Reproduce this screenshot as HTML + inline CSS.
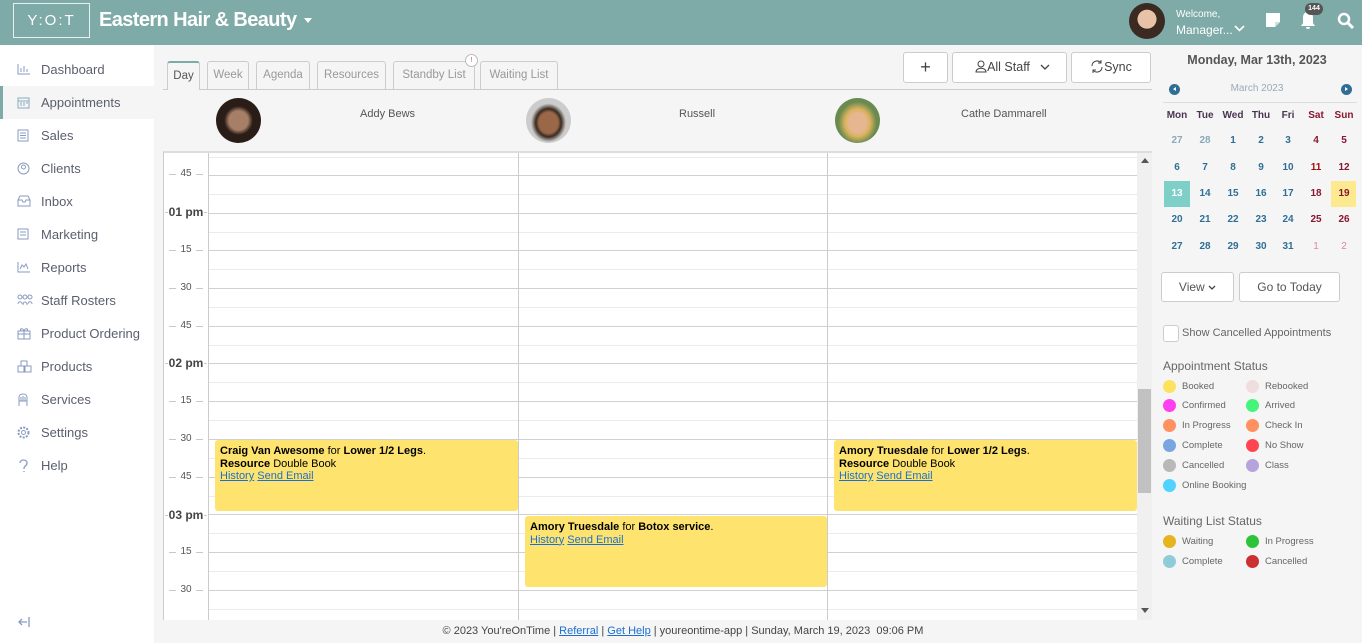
<!DOCTYPE html>
<html><head><meta charset="utf-8"><style>
*{box-sizing:border-box;margin:0;padding:0}
body{width:1362px;height:643px;overflow:hidden;background:#f5f5f5;font-family:"Liberation Sans",sans-serif;position:relative;color:#555}
.a{position:absolute}
.top{left:0;top:0;width:1362px;height:45px;background:#7eaaa8}
.side{left:0;top:45px;width:154px;height:598px;background:#fff}
.nav{left:0;width:154px;height:33px;font-size:13px;color:#5a5f6e;line-height:33px;padding-left:41px}
.nav svg{position:absolute;left:17px;top:10px}
.tab{top:61px;height:28px;border:1px solid #ccc;border-bottom:none;border-radius:3px 3px 0 0;font-size:11.5px;color:#999;text-align:center;line-height:27px;background:#f5f5f5}
.btn{background:#fff;border:1px solid #ccc;border-radius:3px;font-size:12.5px;color:#444;text-align:center}
.hl{left:208px;width:929px;height:1px;background:#d0d0d0}
.fl{left:208px;width:929px;height:1px;background:#ebebeb}
.lab{left:164px;width:44px;text-align:center;font-size:10px;color:#555;height:12px;line-height:12px;background:linear-gradient(#c8c8c8,#c8c8c8) no-repeat center/34px 1px}
.lab span{background:#fff;padding:0 4px}
.hr{font-size:12px;font-weight:bold;color:#444;background-size:42px 1px}
.hr span{padding:0 1px}
.appt{background:#fee46f;border-radius:3px;font-size:11px;color:#000;padding:5px 5px;line-height:12.5px}
.appt a{color:#1a6fd0;text-decoration:underline}
.cal{font-size:10px;font-weight:bold;text-align:center;width:26px;color:#2f6f95}
.dot{width:13px;height:13px;border-radius:50%}
.lg{font-size:9.5px;color:#666}
</style></head><body>
<div class="a top"></div>
<div class="a" style="left:13px;top:3px;width:77px;height:35px;border:1px solid #e8f0ef;color:#fff;font-size:15px;letter-spacing:2px;text-align:center;line-height:33px">Y:O:T</div>
<div class="a" style="left:99px;top:9px;color:#fff;font-size:20px;font-weight:bold;letter-spacing:-0.6px">Eastern Hair &amp; Beauty</div>
<div class="a" style="left:304px;top:18px;width:0;height:0;border-left:4px solid transparent;border-right:4px solid transparent;border-top:5px solid #fff"></div>
<div class="a" style="left:1129px;top:3px;width:36px;height:36px;border-radius:50%;background:radial-gradient(circle at 50% 45%,#e8c2a6 0 35%,#3b2a22 36%)"></div>
<div class="a" style="left:1176px;top:9px;color:#fff;font-size:10px">Welcome,</div>
<div class="a" style="left:1176px;top:23px;color:#fff;font-size:12px">Manager...</div>
<svg class="a" style="left:1234px;top:25px" width="11" height="8"><path d="M1 1l4.5 4.5L10 1" stroke="#fff" stroke-width="1.6" fill="none"/></svg>
<svg class="a" style="left:1265px;top:12px" width="16" height="16"><path d="M1 1h14v9l-5 5H1z" fill="#fff"/><path d="M10 15v-5h5" fill="#cfe0df"/></svg>
<svg class="a" style="left:1299px;top:11px" width="18" height="18"><path d="M9 1c-4 0-5 3-5 6v5l-2 3h14l-2-3V7c0-3-1-6-5-6zM7 16h4a2 2 0 0 1-4 0z" fill="#fff"/></svg>
<div class="a" style="left:1305px;top:3px;width:18px;height:12px;border-radius:6px;background:#555;color:#fff;font-size:7px;text-align:center;line-height:12px;font-weight:bold">144</div>
<svg class="a" style="left:1337px;top:12px" width="17" height="17"><circle cx="7" cy="7" r="5" stroke="#fff" stroke-width="2.5" fill="none"/><path d="M11 11l5 5" stroke="#fff" stroke-width="3"/></svg>

<div class="a side"></div>
<div class="a" style="left:0;top:86px;width:154px;height:33px;background:#f5f5f5"></div>
<div class="a" style="left:0;top:86px;width:3px;height:33px;background:#7eaaa8"></div>
<div class="a nav" style="top:53px"><svg width="14" height="12"><path d="M1 1v10h12M4 9V5M7 9V3M10 9V6" stroke="#8a9bc0" fill="none"/></svg>Dashboard</div>
<div class="a nav" style="top:86px"><svg width="13" height="13"><rect x="1" y="2" width="11" height="10" stroke="#8ab" fill="none"/><path d="M1 5h11M3 7h2M6 7h2M9 7h2M3 9h2M6 9h2" stroke="#8ab"/></svg>Appointments</div>
<div class="a nav" style="top:119px"><svg width="12" height="13"><rect x="1" y="1" width="10" height="11" stroke="#8a9bc0" fill="none"/><path d="M3 4h6M3 6.5h6M3 9h6" stroke="#8a9bc0"/></svg>Sales</div>
<div class="a nav" style="top:152px"><svg width="13" height="13"><circle cx="6.5" cy="6.5" r="5.5" stroke="#8a9bc0" fill="none"/><circle cx="6.5" cy="5" r="2" stroke="#8a9bc0" fill="none"/></svg>Clients</div>
<div class="a nav" style="top:185px"><svg width="14" height="12"><path d="M1 5l2-4h8l2 4v6H1zM1 5h4l1 2h2l1-2h4" stroke="#8a9bc0" fill="none"/></svg>Inbox</div>
<div class="a nav" style="top:218px"><svg width="12" height="12"><rect x="1" y="1" width="10" height="10" stroke="#8a9bc0" fill="none"/><path d="M3 4h6M3 7h6" stroke="#8a9bc0"/></svg>Marketing</div>
<div class="a nav" style="top:251px"><svg width="14" height="12"><path d="M1 1v10h12M3 8l2-4 2 2 2-3 2 5" stroke="#8a9bc0" fill="none"/></svg>Reports</div>
<div class="a nav" style="top:284px"><svg width="16" height="12"><circle cx="3" cy="3" r="2" stroke="#8a9bc0" fill="none"/><circle cx="8" cy="3" r="2" stroke="#8a9bc0" fill="none"/><circle cx="13" cy="3" r="2" stroke="#8a9bc0" fill="none"/><path d="M1 10c0-3 4-3 4 0M6 11c0-4 4-4 4 0M11 10c0-3 4-3 4 0" stroke="#8a9bc0" fill="none"/></svg>Staff Rosters</div>
<div class="a nav" style="top:317px"><svg width="14" height="13"><rect x="1" y="4" width="12" height="8" stroke="#8a9bc0" fill="none"/><path d="M7 4v8M1 7h12M4 4C2 1 6 1 7 4c1-3 5-3 3 0" stroke="#8a9bc0" fill="none"/></svg>Product Ordering</div>
<div class="a nav" style="top:350px"><svg width="15" height="13"><rect x="1" y="6" width="6" height="6" stroke="#8a9bc0" fill="none"/><rect x="8" y="6" width="6" height="6" stroke="#8a9bc0" fill="none"/><rect x="4" y="1" width="6" height="5" stroke="#8a9bc0" fill="none"/></svg>Products</div>
<div class="a nav" style="top:383px"><svg width="12" height="14"><path d="M2 13V4c0-4 8-4 8 0v9M2 8h8M4 4v4M6 3v5M8 4v4" stroke="#8a9bc0" fill="none"/></svg>Services</div>
<div class="a nav" style="top:416px"><svg width="13" height="13"><circle cx="6.5" cy="6.5" r="2" stroke="#8a9bc0" fill="none"/><circle cx="6.5" cy="6.5" r="5" stroke="#8a9bc0" stroke-dasharray="2 1.3" stroke-width="2" fill="none"/></svg>Settings</div>
<div class="a nav" style="top:449px"><svg width="12" height="14"><path d="M3 4c0-4 7-4 7 0 0 3-3 3-3 5v1M7 12v1" stroke="#8a9bc0" fill="none" stroke-width="1.3"/></svg>Help</div>
<svg class="a" style="left:17px;top:616px" width="14" height="12"><path d="M12 1v10M10 6H2M5 3L2 6l3 3" stroke="#8a9bc0" stroke-width="1.3" fill="none"/></svg>

<div class="a" style="left:163px;top:89px;width:989px;height:1px;background:#ccc"></div>
<div class="a tab" style="left:167px;width:33px;color:#555;background:#f5f5f5;height:29px;border-top:2px solid #7eaaa8">Day</div>
<div class="a tab" style="left:207px;width:42px">Week</div>
<div class="a tab" style="left:256px;width:54px">Agenda</div>
<div class="a tab" style="left:317px;width:69px">Resources</div>
<div class="a tab" style="left:393px;width:82px">Standby List</div>
<div class="a" style="left:465px;top:54px;width:13px;height:13px;border-radius:50%;border:1px solid #bbb;background:#fff;font-size:7px;text-align:center;line-height:11px;color:#a55">!</div>
<div class="a tab" style="left:480px;width:78px">Waiting List</div>

<div class="a btn" style="left:903px;top:52px;width:45px;height:31px;font-size:18px;line-height:28px">+</div>
<div class="a btn" style="left:952px;top:52px;width:115px;height:31px;line-height:29px;padding-right:14px"><svg width="12" height="13" style="vertical-align:-2px"><circle cx="6" cy="4" r="3" stroke="#444" fill="none"/><path d="M1 12c0-5 10-5 10 0z" stroke="#444" fill="none"/></svg>All Staff</div>
<svg class="a" style="left:1040px;top:64px" width="10" height="6"><path d="M1 1l4 4 4-4" stroke="#444" fill="none" stroke-width="1.3"/></svg>
<div class="a btn" style="left:1071px;top:52px;width:80px;height:31px;line-height:29px"><svg width="14" height="13" style="vertical-align:-2px"><path d="M2 6a5 5 0 0 1 9-3M12 7a5 5 0 0 1-9 3M11 0v3H8M3 13v-3h3" stroke="#444" fill="none"/></svg>Sync</div>

<div class="a" style="left:216px;top:98px;width:45px;height:45px;border-radius:50%;background:radial-gradient(ellipse at 50% 50%,#a77f66 0 30%,#2a1d17 45%)"></div>
<div class="a" style="left:360px;top:108px;font-size:11px;color:#555">Addy Bews</div>
<div class="a" style="left:526px;top:98px;width:45px;height:45px;border-radius:50%;background:radial-gradient(ellipse at 50% 55%,#9a6848 0 30%,#3a2a20 40%,#ccc 55%)"></div>
<div class="a" style="left:679px;top:108px;font-size:11px;color:#555">Russell</div>
<div class="a" style="left:835px;top:98px;width:45px;height:45px;border-radius:50%;background:radial-gradient(ellipse at 50% 55%,#e6b690 0 28%,#d9b25a 40%,#6a8a50 60%)"></div>
<div class="a" style="left:961px;top:108px;font-size:11px;color:#555">Cathe Dammarell</div>

<div class="a" style="left:163px;top:151px;width:989px;height:469px;background:#fff;border-top:2px solid #ddd;border-left:1px solid #ccc"></div>
<div class="a" style="left:1137px;top:153px;width:15px;height:467px;background:#f0f0f0"></div>
<div class="a" style="left:1138px;top:389px;width:13px;height:104px;background:#c1c1c1"></div>
<div class="a" style="left:1141px;top:158px;border-left:4px solid transparent;border-right:4px solid transparent;border-bottom:5px solid #555"></div>
<div class="a" style="left:1141px;top:608px;border-left:4px solid transparent;border-right:4px solid transparent;border-top:5px solid #555"></div>

<div class="a fl" style="top:157px"></div><div class="a fl" style="top:194px"></div><div class="a fl" style="top:232px"></div><div class="a fl" style="top:269px"></div><div class="a fl" style="top:307px"></div><div class="a fl" style="top:345px"></div><div class="a fl" style="top:382px"></div><div class="a fl" style="top:420px"></div><div class="a fl" style="top:458px"></div><div class="a fl" style="top:496px"></div><div class="a fl" style="top:533px"></div><div class="a fl" style="top:571px"></div><div class="a fl" style="top:609px"></div>
<div class="a hl" style="top:175px"></div><div class="a hl" style="top:213px"></div><div class="a hl" style="top:250px"></div><div class="a hl" style="top:288px"></div><div class="a hl" style="top:326px"></div><div class="a hl" style="top:363px"></div><div class="a hl" style="top:401px"></div><div class="a hl" style="top:439px"></div><div class="a hl" style="top:477px"></div><div class="a hl" style="top:514px"></div><div class="a hl" style="top:552px"></div><div class="a hl" style="top:590px"></div>
<div class="a" style="left:208px;top:153px;width:1px;height:467px;background:#ccc"></div>
<div class="a" style="left:518px;top:153px;width:1px;height:467px;background:#ccc"></div>
<div class="a" style="left:827px;top:153px;width:1px;height:467px;background:#ccc"></div>

<div class="a lab" style="top:168px"><span>45</span></div>
<div class="a lab hr" style="top:206px"><span>01 pm</span></div>
<div class="a lab" style="top:244px"><span>15</span></div>
<div class="a lab" style="top:282px"><span>30</span></div>
<div class="a lab" style="top:320px"><span>45</span></div>
<div class="a lab hr" style="top:357px"><span>02 pm</span></div>
<div class="a lab" style="top:395px"><span>15</span></div>
<div class="a lab" style="top:433px"><span>30</span></div>
<div class="a lab" style="top:471px"><span>45</span></div>
<div class="a lab hr" style="top:509px"><span>03 pm</span></div>
<div class="a lab" style="top:546px"><span>15</span></div>
<div class="a lab" style="top:584px"><span>30</span></div>

<div class="a appt" style="left:215px;top:440px;width:303px;height:71px"><b>Craig Van Awesome</b> for <b>Lower 1/2 Legs</b>.<br><b>Resource</b> Double Book<br><a>History</a> <a>Send Email</a></div>
<div class="a appt" style="left:525px;top:516px;width:302px;height:71px"><b>Amory Truesdale</b> for <b>Botox service</b>.<br><a>History</a> <a>Send Email</a></div>
<div class="a appt" style="left:834px;top:440px;width:303px;height:71px"><b>Amory Truesdale</b> for <b>Lower 1/2 Legs</b>.<br><b>Resource</b> Double Book<br><a>History</a> <a>Send Email</a></div>

<div class="a" style="left:154px;top:620px;width:1058px;height:23px;text-align:center;font-size:11px;line-height:23px;color:#444">© 2023 You'reOnTime | <u style="color:#1a6fd0">Referral</u> | <u style="color:#1a6fd0">Get Help</u> | youreontime-app | Sunday, March 19, 2023&nbsp; 09:06 PM</div>

<!-- right panel -->
<div class="a" style="left:1152px;top:53px;width:210px;text-align:center;font-size:12.5px;font-weight:bold;color:#555">Monday, Mar 13th, 2023</div>
<div class="a" style="left:1169px;top:84px;width:11px;height:11px;border-radius:50%;background:#2f6f95"></div>
<div class="a" style="left:1173px;top:87px;border-top:2.5px solid transparent;border-bottom:2.5px solid transparent;border-right:3px solid #fff"></div>
<div class="a" style="left:1341px;top:84px;width:11px;height:11px;border-radius:50%;background:#2f6f95"></div>
<div class="a" style="left:1345px;top:87px;border-top:2.5px solid transparent;border-bottom:2.5px solid transparent;border-left:3px solid #fff"></div>
<div class="a" style="left:1152px;top:83px;width:210px;text-align:center;font-size:10px;color:#9ab">March 2023</div>
<div class="a" style="left:1163px;top:102px;width:194px;height:1px;background:#ddd"></div>
<div class="a" style="left:1164px;top:181px;width:26px;height:26px;background:#7fcfc9"></div>
<div class="a" style="left:1331px;top:181px;width:25px;height:26px;background:#fde98f"></div>
<div class="a" style="left:1164px;top:110px;font-size:10px;font-weight:bold;color:#4a3550;width:200px">
<span class="a cal" style="left:0;color:#4a3550">Mon</span><span class="a cal" style="left:28px;color:#4a3550">Tue</span><span class="a cal" style="left:56px;color:#4a3550">Wed</span><span class="a cal" style="left:84px;color:#4a3550">Thu</span><span class="a cal" style="left:111px;color:#4a3550">Fri</span><span class="a cal" style="left:139px;color:#8a1530">Sat</span><span class="a cal" style="left:167px;color:#8a1530">Sun</span>
</div>
<div class="a" style="left:1164px;top:135px">
<span class="a cal" style="left:0;color:#8ab">27</span><span class="a cal" style="left:28px;color:#8ab">28</span><span class="a cal" style="left:56px">1</span><span class="a cal" style="left:84px">2</span><span class="a cal" style="left:111px">3</span><span class="a cal" style="left:139px;color:#8a1530">4</span><span class="a cal" style="left:167px;color:#8a1530">5</span>
</div>
<div class="a" style="left:1164px;top:162px">
<span class="a cal" style="left:0">6</span><span class="a cal" style="left:28px">7</span><span class="a cal" style="left:56px">8</span><span class="a cal" style="left:84px">9</span><span class="a cal" style="left:111px">10</span><span class="a cal" style="left:139px;color:#a01010">11</span><span class="a cal" style="left:167px;color:#8a1530">12</span>
</div>
<div class="a" style="left:1164px;top:188px">
<span class="a cal" style="left:0;color:#fff">13</span><span class="a cal" style="left:28px">14</span><span class="a cal" style="left:56px">15</span><span class="a cal" style="left:84px">16</span><span class="a cal" style="left:111px">17</span><span class="a cal" style="left:139px;color:#8a1530">18</span><span class="a cal" style="left:167px;color:#8a1530">19</span>
</div>
<div class="a" style="left:1164px;top:214px">
<span class="a cal" style="left:0">20</span><span class="a cal" style="left:28px">21</span><span class="a cal" style="left:56px">22</span><span class="a cal" style="left:84px">23</span><span class="a cal" style="left:111px">24</span><span class="a cal" style="left:139px;color:#8a1530">25</span><span class="a cal" style="left:167px;color:#8a1530">26</span>
</div>
<div class="a" style="left:1164px;top:241px">
<span class="a cal" style="left:0">27</span><span class="a cal" style="left:28px">28</span><span class="a cal" style="left:56px">29</span><span class="a cal" style="left:84px">30</span><span class="a cal" style="left:111px">31</span><span class="a cal" style="left:139px;color:#d98a9a;font-weight:normal">1</span><span class="a cal" style="left:167px;color:#d98a9a;font-weight:normal">2</span>
</div>

<div class="a btn" style="left:1161px;top:272px;width:73px;height:30px;line-height:29px;font-size:12px;color:#555">View <svg width="8" height="6"><path d="M1 1l3 3 3-3" stroke="#444" fill="none" stroke-width="1.3"/></svg></div>
<div class="a btn" style="left:1239px;top:272px;width:101px;height:30px;line-height:29px;font-size:12px;color:#555">Go to Today</div>
<div class="a" style="left:1163px;top:325px;width:16px;height:17px;border:1px solid #ccc;border-radius:3px;background:#fff"></div>
<div class="a" style="left:1182px;top:327px;font-size:11px;color:#666">Show Cancelled Appointments</div>
<div class="a" style="left:1163px;top:359px;font-size:12px;color:#666">Appointment Status</div>
<div class="a" style="left:1163px;top:514px;font-size:12px;color:#666">Waiting List Status</div>

<div class="a dot" style="left:1163px;top:380px;background:#fde25e"></div><div class="a lg" style="left:1182px;top:381px">Booked</div>
<div class="a dot" style="left:1246px;top:380px;background:#f0dddd"></div><div class="a lg" style="left:1265px;top:381px">Rebooked</div>
<div class="a dot" style="left:1163px;top:399px;background:#ff40f0"></div><div class="a lg" style="left:1182px;top:400px">Confirmed</div>
<div class="a dot" style="left:1246px;top:399px;background:#45f57a"></div><div class="a lg" style="left:1265px;top:400px">Arrived</div>
<div class="a dot" style="left:1163px;top:419px;background:#ff9060"></div><div class="a lg" style="left:1182px;top:420px">In Progress</div>
<div class="a dot" style="left:1246px;top:419px;background:#ff9060"></div><div class="a lg" style="left:1265px;top:420px">Check In</div>
<div class="a dot" style="left:1163px;top:439px;background:#79a6e0"></div><div class="a lg" style="left:1182px;top:440px">Complete</div>
<div class="a dot" style="left:1246px;top:439px;background:#ff4550"></div><div class="a lg" style="left:1265px;top:440px">No Show</div>
<div class="a dot" style="left:1163px;top:459px;background:#b8b8b8"></div><div class="a lg" style="left:1182px;top:460px">Cancelled</div>
<div class="a dot" style="left:1246px;top:459px;background:#b5a3dc"></div><div class="a lg" style="left:1265px;top:460px">Class</div>
<div class="a dot" style="left:1163px;top:479px;background:#50d4ff"></div><div class="a lg" style="left:1182px;top:480px">Online Booking</div>
<div class="a dot" style="left:1163px;top:535px;background:#e6b41e"></div><div class="a lg" style="left:1182px;top:536px">Waiting</div>
<div class="a dot" style="left:1246px;top:535px;background:#2ec43a"></div><div class="a lg" style="left:1265px;top:536px">In Progress</div>
<div class="a dot" style="left:1163px;top:555px;background:#8fccd8"></div><div class="a lg" style="left:1182px;top:556px">Complete</div>
<div class="a dot" style="left:1246px;top:555px;background:#cc3030"></div><div class="a lg" style="left:1265px;top:556px">Cancelled</div>
</body></html>
